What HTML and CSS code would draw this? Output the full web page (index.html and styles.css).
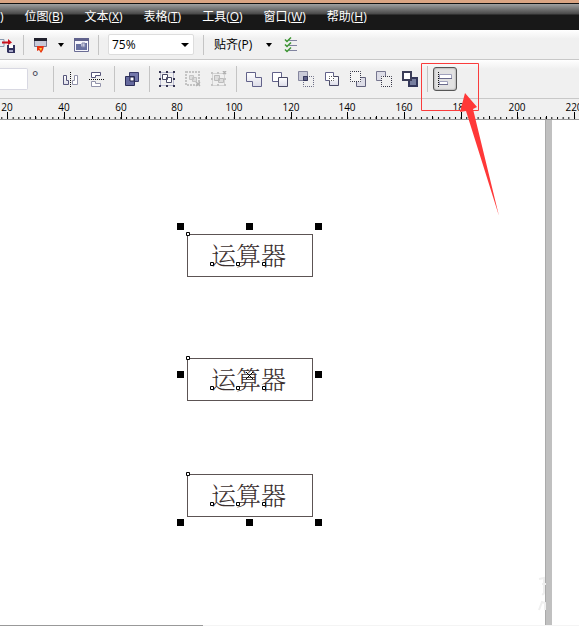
FILE: index.html
```html
<!DOCTYPE html>
<html lang="zh-CN">
<head>
<meta charset="utf-8">
<title>CorelDRAW</title>
<link rel="stylesheet" href="styles.css">
</head>
<body>
<svg class="defs" aria-hidden="true">
  <defs>
    <linearGradient id="pale" x1="0" y1="0" x2="0" y2="1"><stop offset="0" stop-color="#fff"/><stop offset="1" stop-color="#dcdce8"/></linearGradient>
    <pattern id="minor" x="7" y="0" width="5.67" height="21" patternUnits="userSpaceOnUse"><path d="M.5 18v2" stroke="#000"/></pattern>
    <g id="nodes" fill="#fff" stroke="#000"><path d="M22.500 27.500h3v3h-3zM48.500 27.500h3v3h-3zM74.500 27.500h3v3h-3zM-1.500-2.500h3v3h-3z"/></g>
  </defs>
</svg>
<div class="app">
  <nav class="menu">
    <a href="#">)</a>
    <a href="#">位图(<u>B</u>)</a>
    <a href="#">文本(<u>X</u>)</a>
    <a href="#">表格(<u>T</u>)</a>
    <a href="#">工具(<u>O</u>)</a>
    <a href="#">窗口(<u>W</u>)</a>
    <a href="#">帮助(<u>H</u>)</a>
  </nav>

  <div class="bar standard">
    <button class="tool" aria-label="导出"><svg width="16" height="16" viewBox="0 0 16 16"><path d="M0 2.500h4v7H0" fill="#e8eef4" stroke="#8a9ab0"/><path d="M2 4.500h6V2l4 3.500L8 8V6.500H2z" fill="#c8101c"/><path d="M7 8h8v8H8l-1-1z" fill="#30305c"/><path d="M9 8h4v3H9z" fill="#fff"/><path d="M9 13h4v2H9z" fill="#a8a8c8"/></svg></button>
    <span class="sep"></span>
    <span class="group">
      <button class="tool" aria-label="应用程序启动器"><svg width="16" height="16" viewBox="0 0 16 16"><path d="M1.500 1.500h12v8h-12z" fill="#c9cad8" stroke="#777790"/><path d="M1 1h13v3H1z" fill="#20202c"/><path d="M4 9h7l-1 4-2 3-2-3-2 1z" fill="#e83210"/><path d="M6 11h3l-1 3z" fill="#ffd030"/></svg></button>
      <svg class="caret" width="6" height="4" viewBox="0 0 6 4"><path d="M0 0h6L3 4z"/></svg>
      <button class="tool" aria-label="欢迎屏幕"><svg width="16" height="16" viewBox="0 0 16 16"><path d="M1.500 1.500h14v13h-14z" fill="#f6f6fc" stroke="#6a6c94"/><path d="M1 1h15v3H1z" fill="#60628c"/><path d="M3 7h5v3l3-4h3v7H3z" fill="#6870a0"/><path d="M9 6h3v4H9z" fill="#c8cbe0" stroke="#8185aa"/></svg></button>
    </span>
    <span class="sep"></span>
    <label class="zoom"><select aria-label="缩放级别"><option>75%</option></select><svg width="8" height="4" viewBox="0 0 8 4"><path d="M0 0h8L4 4z"/></svg></label>
    <span class="sep"></span>
    <button class="snap">贴齐(P)<svg width="6" height="4" viewBox="0 0 6 4"><path d="M0 0h6L3 4z"/></svg></button>
    <button class="tool" aria-label="选项"><svg width="16" height="16" viewBox="0 0 16 16"><path d="M6 3.500h8M6 8.500h8M6 13.500h8" stroke="#8184a0"/><path d="M2 2.500l2 2 4-4M2 7.500l2 2 4-4M2 12.500l2 2 4-4" fill="none" stroke="#3b9430" stroke-width="1.500"/></svg></button>
  </div>

  <div class="bar property">
    <label class="angle"><input type="text" aria-label="旋转角度"><span>°</span></label>
    <span class="sep"></span>
    <span class="group">
      <button class="tool" aria-label="水平镜像"><svg width="16" height="16" viewBox="0 0 16 16"><path d="M.5 4.500h3v5h2v4h-5z" fill="url(#pale)" stroke="#55557a"/><path d="M14.500 4.500h-3v5h-2v4h5z" fill="#fff" stroke="#9293aa"/><path d="M7.500 1v15" stroke="#111" stroke-dasharray="1 1"/></svg></button>
      <button class="tool" aria-label="垂直镜像"><svg width="16" height="16" viewBox="0 0 16 16"><path d="M2.500 1.500h9v3h-5v2h-4z" fill="#fff" stroke="#55557a"/><path d="M2.500 10.500h4v2h5v3h-9z" fill="#fff" stroke="#9293aa"/><path d="M0 8.500h15" stroke="#111" stroke-dasharray="1 1"/></svg></button>
    </span>
    <span class="sep"></span>
    <button class="tool" aria-label="合并"><svg width="16" height="16" viewBox="0 0 16 16"><path d="M5.500 1.500h9v9h-9z" fill="#7377aa" stroke="#393b69"/><path d="M1.500 5.500h9v9h-9z" fill="#666a9e" stroke="#2c2e58"/><path d="M6 6h4v4H6z" fill="#fff" stroke="#20224c"/></svg></button>
    <span class="sep"></span>
    <span class="group">
      <button class="tool" aria-label="群组"><svg width="16" height="16" viewBox="0 0 16 16"><path d="M1.500 1.500h13v13h-13z" fill="none" stroke="#b9bad0"/><path d="M0 0h2v2H0zM7 0h2v2H7zM14 0h2v2h-2zM0 7h2v2H0zM14 7h2v2h-2zM0 14h2v2H0zM7 14h2v2H7zM14 14h2v2h-2z" fill="#33334f"/><path d="M3.500 3.500h5v5h-5zM7.500 6.500h5v5h-5z" fill="#fff" stroke="#484966"/></svg></button>
      <button class="tool" aria-label="取消群组" disabled><svg width="16" height="16" viewBox="0 0 16 16"><path d="M1 1h13v13H1z" fill="none" stroke="#c4c4c4" stroke-width="2" stroke-dasharray="2 1"/><path d="M4.500 4.500h4v4h-4zM7.500 6.500h4v4h-4z" fill="#ddd" stroke="#c4c4c4"/><path d="M11 11l4 4m0-4l-4 4" stroke="#b4b4b4" stroke-width="1.500"/></svg></button>
      <button class="tool" aria-label="取消全部群组" disabled><svg width="16" height="16" viewBox="0 0 16 16"><path d="M1.500 2.500h12v12h-12z" fill="none" stroke="#d4d4d4"/><path d="M0 1h2v2H0zM6 1h2v2H6zM0 7h2v2H0zM13 7h2v2h-2zM0 13h2v2H0zM6 13h2v2H6zM13 13h2v2h-2z" fill="#c4c4c4"/><path d="M3.500 4.500h5v5h-5zM7.500 7.500h5v4h-5z" fill="#ddd" stroke="#bcbcbc"/><path d="M12 0l3 3m0-3l-3 3" stroke="#b0b0b0" stroke-width="1.500"/></svg></button>
    </span>
    <span class="sep"></span>
    <span class="group">
      <button class="tool" aria-label="焊接"><svg width="16" height="16" viewBox="0 0 16 16"><path d="M.5 1.500h9v5h6v9h-9v-5h-6z" fill="url(#pale)" stroke="#62628a"/></svg></button>
      <button class="tool" aria-label="修剪"><svg width="16" height="16" viewBox="0 0 16 16"><path d="M.5 1.500h9v9h-9z" fill="#fff" stroke="#62628a"/><path d="M6.500 6.500h9v9h-9z" fill="url(#pale)" stroke="#494966"/></svg></button>
      <button class="tool" aria-label="相交"><svg width="16" height="16" viewBox="0 0 16 16"><path d="M.5.5h9v9h-9z" fill="#c9cad8" stroke="#85869e"/><path d="M5.500 5.500h10v10h-10z" fill="none" stroke="#6b6c85" stroke-dasharray="1 1" stroke-dashoffset=".5"/><path d="M5.500 5.500h4v4h-4z" fill="#5d6088" stroke="#35365a"/></svg></button>
      <button class="tool" aria-label="简化"><svg width="16" height="16" viewBox="0 0 16 16"><path d="M1.500 1.500h8v8h-8z" fill="#fff" stroke="#62628a"/><path d="M5.500 5.500h9v9h-9z" fill="url(#pale)" stroke="#494966"/><path d="M5.500 5.500h4v4h-4z" fill="#fff" stroke="#fff"/><path d="M5.500 5.500h4v4h-4z" fill="none" stroke="#555" stroke-dasharray="1 1" stroke-dashoffset=".5"/></svg></button>
      <button class="tool" aria-label="移除后面对象"><svg width="16" height="16" viewBox="0 0 16 16"><path d="M10.500 6.500h5v9h-9v-5h4z" fill="#dddde7" stroke="#62627c"/><path d="M.5.5h10v10H.5z" fill="#f4f4f4" stroke="#f4f4f4"/><path d="M.5.5h10v10H.5z" fill="none" stroke="#333344" stroke-dasharray="1 1" stroke-dashoffset=".5"/></svg></button>
      <button class="tool" aria-label="移除前面对象"><svg width="16" height="16" viewBox="0 0 16 16"><path d="M.5.5h9v5h-4v4h-5z" fill="#dddde7" stroke="#777790"/><path d="M5.500 5.500h10v10h-10z" fill="#f0f0f0" stroke="#f0f0f0"/><path d="M5.500 5.500h10v10h-10z" fill="none" stroke="#333344" stroke-dasharray="1 1" stroke-dashoffset=".5"/></svg></button>
      <button class="tool" aria-label="边界"><svg width="16" height="16" viewBox="0 0 16 16"><path d="M7 7h8v8H7z" fill="#777f9f" stroke="#33375a" stroke-width="2"/><path d="M1 1h8v8H1z" fill="#fff" stroke="#3b3d58" stroke-width="2"/></svg></button>
    </span>
    <span class="sep"></span>
    <button class="tool align" aria-label="对齐与分布"><svg width="16" height="16" viewBox="0 0 16 16"><path d="M1.500 1v15" stroke="#111" stroke-dasharray="1 1"/><path d="M2.500 3.500h12v4h-12zM2.500 10.500h8v3h-8z" fill="#fff" stroke="#a0a1bc"/><path d="M2 7.500h13M2 13.500h9" stroke="#6a6b8c"/></svg></button>
  </div>

  <svg class="ruler" aria-label="标尺">
    <rect width="100%" height="21" fill="url(#minor)"/>
    <path d="M7.500 13v7M64.500 13v7M121.500 13v7M177.500 13v7M234.500 13v7M291.500 13v7M347.500 13v7M404.500 13v7M461.500 13v7M517.500 13v7M574.500 13v7M35.500 17v3M92.500 17v3M149.500 17v3M206.500 17v3M262.500 17v3M319.500 17v3M376.500 17v3M432.500 17v3M489.500 17v3M546.500 17v3" stroke="#000"/>
    <text x="7" y="12">20</text><text x="64" y="12">40</text><text x="121" y="12">60</text><text x="177" y="12">80</text><text x="234" y="12">100</text><text x="291" y="12">120</text><text x="347" y="12">140</text><text x="404" y="12">160</text><text x="461" y="12">180</text><text x="517" y="12">200</text><text x="574" y="12">220</text>
  </svg>

  <main class="canvas">
    <div class="page-edge"></div>
    <svg class="watermark" width="10" height="36" viewBox="0 0 10 36"><path d="M3 3l5-1v6M6 8h4M8 8v8q0 3-2 2M3 34l3-8 3 1v7" fill="none" stroke="#efefef" stroke-width="2"/></svg>
    <div class="object first">运算器<svg class="nodes"><use href="#nodes"/></svg></div>
    <div class="object second">运算器<svg class="nodes"><use href="#nodes"/><path d="M58 13l7 7m0-7l-7 7" stroke="#000"/></svg></div>
    <div class="object third">运算器<svg class="nodes"><use href="#nodes"/></svg></div>
    <div class="selection">
      <i></i><i></i><i></i>
      <i></i><b></b><i></i>
      <i></i><i></i><i></i>
    </div>
  </main>
  <footer class="status"></footer>

  <svg class="callout" width="80" height="156" viewBox="0 0 80 156"><path d="M.5.5h57v47H.5z" fill="none" stroke="#fa3c3c"/><path d="M44 30l12 14-4 2 26 107L45 48l-6 1z" fill="#ff3838"/></svg>
</div>
</body>
</html>
```

FILE: styles.css
```css
* { box-sizing: border-box; }
body {
  margin: 0;
  background: #fff;
  font: 12px/16px "Open Sans", "Noto Sans CJK SC", sans-serif;
  color: #000;
}
.defs { position: absolute; width: 0; height: 0; }
.app {
  position: relative;
  display: flex;
  flex-direction: column;
  min-height: 100vh;
  overflow: hidden;
}
.menu {
  display: flex;
  gap: 21px;
  height: 30px;
  padding-top: 6px;
  border-top: 3px solid #dba583;
  background: linear-gradient(#111 0 1px, #a0a0a0 1px, #484848 11px, #181818 12px);
  white-space: nowrap;
}
.menu a { color: #fff; text-decoration: none; }
.bar {
  display: flex;
  align-items: center;
  background: linear-gradient(#fff, #f0f0f0 9px);
  border-bottom: 1px solid #c8c8c8;
}
.standard { gap: 9px; height: 30px; }
.property { gap: 9px; height: 39px; }
.group { display: flex; align-items: center; gap: 10px; }
.standard .group { gap: 9px; }
.sep { width: 1px; height: 20px; background: #c4c4c4; }
.property .sep { height: 26px; }
.tool {
  display: block;
  width: 16px;
  height: 16px;
  padding: 0;
  border: 0;
  background: none;
}
.tool svg { display: block; }
.standard > .tool:first-child { width: 14px; }
.zoom { position: relative; display: block; }
.zoom select {
  display: block;
  appearance: none;
  width: 86px;
  height: 21px;
  padding: 0 3px;
  border: 1px solid #ddd;
  border-radius: 2px;
  background: #fff;
  font: inherit;
  color: #000;
}
.zoom svg { position: absolute; right: 5px; top: 9px; pointer-events: none; }
.snap {
  display: flex;
  align-items: center;
  gap: 14px;
  padding: 0 2px 0 1px;
  border: 0;
  background: none;
  font: inherit;
}
.angle { display: flex; gap: 4px; width: 44px; }
.angle input {
  width: 28px;
  height: 22px;
  border: 1px solid #d8d8e2;
  border-left: 0;
  border-radius: 0 2px 2px 0;
  background: #fff;
}
.angle span { font-size: 15px; color: #445; }
.align {
  width: 24px;
  height: 24px;
  margin-left: -4px;
  padding: 3px;
  border: 1px solid #555;
  border-radius: 3px;
  background: #e2e2e2;
  box-shadow: inset 0 0 2px #777;
}
.ruler {
  display: block;
  width: 100%;
  height: 21px;
  background: #f0f0f0;
  border-bottom: 1px solid #999;
}
.ruler text {
  font: 10px "Open Sans", sans-serif;
  text-anchor: middle;
}
.canvas { position: relative; flex: 1; min-height: 504px; }
.page-edge {
  position: absolute;
  top: 0;
  bottom: 0;
  left: 545px;
  width: 7px;
  background: #c0c0c0;
  border-left: 1px solid #aaa;
}
.watermark { position: absolute; left: 536px; top: 456px; }
.object {
  position: absolute;
  left: 187px;
  width: 126px;
  height: 43px;
  padding-left: 23px;
  border: 1px solid #5c5454;
  font: 300 25px/38px "Noto Serif CJK SC", "Noto Sans CJK SC", serif;
  color: #3b3030;
  white-space: nowrap;
}
.first { top: 114px; }
.second { top: 238px; }
.third { top: 354px; }
.nodes {
  position: absolute;
  inset: 0;
  width: 100%;
  height: 100%;
  overflow: visible;
}
.selection {
  position: absolute;
  left: 177px;
  top: 103px;
  display: grid;
  grid-template-columns: repeat(3, 7px);
  grid-template-rows: repeat(3, 7px);
  gap: 141px 62px;
}
.selection i { background: #000; }
.status {
  height: 1px;
  background: linear-gradient(90deg, #999 0 35%, #f4f4f4 35%);
}
.callout { position: absolute; left: 421px; top: 63px; }
```
